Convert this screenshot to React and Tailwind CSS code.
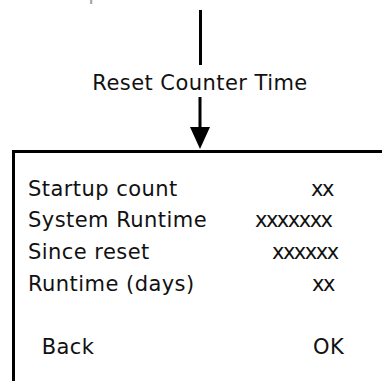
const rows = [
  { label: 'Startup count', value: 'xx', pad: 'pl-[56px]' },
  { label: 'System Runtime', value: 'xxxxxxx', pad: 'pl-0' },
  { label: 'Since reset', value: 'xxxxxx', pad: 'pl-[17px]' },
  { label: 'Runtime (days)', value: 'xx', pad: 'pl-[57px]' },
];

function Arrow() {
  return (
    <svg width="24" height="53" viewBox="0 0 24 53" className="block">
      <rect x="10.5" y="0" width="3" height="31" fill="#000" />
      <polygon points="2,30 22,30 12,52" fill="#000" />
    </svg>
  );
}

export default function App() {
  return (
    <div className="w-[382px] h-[381px] overflow-hidden bg-white text-[#111] font-['DejaVu_Sans',sans-serif] text-[21px] tracking-[0.45px]">
      <div className="w-full pl-[18px] flex flex-col items-center">
        <div className="h-[6px] overflow-hidden self-start -ml-[10px]">
          <div className="-mt-[20.5px] leading-[26px] text-[#a0a0a0] whitespace-nowrap">Button pressed 3s</div>
        </div>
        <div className="mt-[4px] w-[3px] h-[55px] bg-black" />
        <div className="mt-[4.5px] leading-[26px] whitespace-nowrap">Reset Counter Time</div>
        <div className="mt-[1.5px]">
          <Arrow />
        </div>
      </div>

      <div className="ml-[12px] w-[400px] h-[260px] border-[3px] border-black pt-[20.5px] pl-[13px] leading-[31.7px]">
        {rows.map((r) => (
          <div key={r.label} className="flex whitespace-nowrap">
            <span className="w-[227px]">{r.label}</span>
            <span className={`${r.pad} tracking-[-1.5px]`}>{r.value}</span>
          </div>
        ))}
        <div className="h-[31.7px]" />
        <div className="flex whitespace-nowrap">
          <span className="pl-[13.7px] w-[285px]">Back</span>
          <span>OK</span>
        </div>
      </div>
    </div>
  );
}
